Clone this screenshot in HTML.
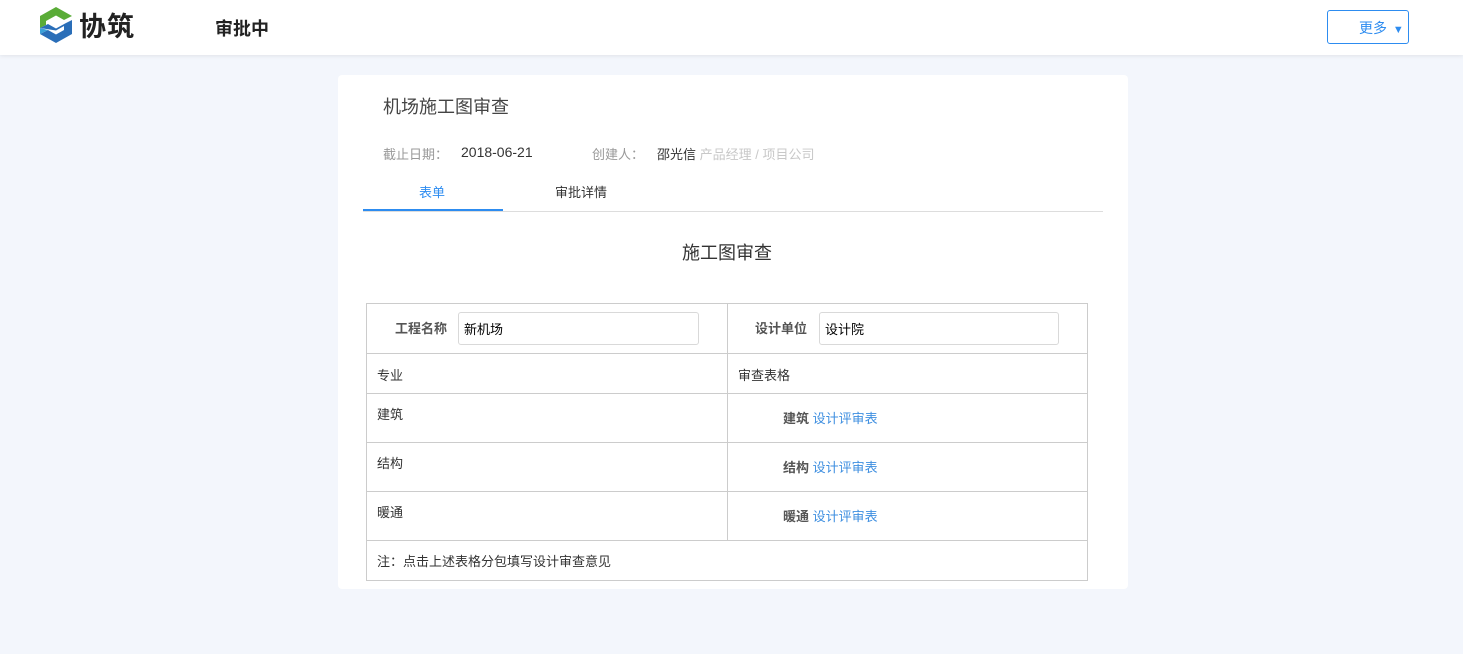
<!DOCTYPE html>
<html><head><meta charset="utf-8"><style>
*{margin:0;padding:0;box-sizing:border-box}
body{width:1463px;height:654px;background:#f3f6fc;font-family:"Liberation Sans","Noto Sans CJK SC",sans-serif;position:relative;overflow:hidden;color:#333}
.a{position:absolute;white-space:nowrap}
.hdr{position:absolute;left:0;top:0;width:1463px;height:55px;background:#fff;box-shadow:0 1px 4px rgba(0,0,0,.08)}
.card{position:absolute;left:338px;top:75px;width:790px;height:514px;background:#fff;border-radius:4px}
.tb{position:absolute;left:366px;top:303px;width:722px;height:278px;border:1px solid #ccc}
.hl{position:absolute;left:0;width:720px;height:1px;background:#ccc}
.inp{position:absolute;height:33px;border:1px solid #d9d9d9;border-radius:3px;font-size:13px;padding:6px 5px;color:#000}
.f13{font-size:13px}
.lk{color:#3f8fe0}
</style></head><body>
<div class="hdr">
<svg class="a" style="left:38px;top:6px" width="36" height="38" viewBox="0 0 36 38">
<path d="M18 1 L34 10 L26 14 L18 9.5 L8 15 L8 19 L2 22 L2 10 Z" fill="#5aac37"/>
<path d="M2 22 L10 18 L18 22.5 L28 17 L34 14 L34 28 L18 37 L2 28 L10 24 L18 28.5 L26 24 L26 20 L18 24.5 Z" fill="#2a6eb8"/>
<path d="M2 22 L2 28 L10 24 Z" fill="#3aa0d8"/>
</svg>
<div class="a" style="left:79px;top:5px;font-size:27px;color:#222;font-weight:bold;letter-spacing:1px">协筑</div>
<div class="a" style="left:215px;top:15px;font-size:18px;font-weight:bold;color:#222">审批中</div>
<div class="a" style="left:1327px;top:10px;width:82px;height:34px;border:1px solid #2d8cf0;border-radius:3px;color:#2d8cf0;font-size:14px;padding:7px 0 0 31px">更多 <span style="font-size:11px;margin-left:2px">▼</span></div>
</div>
<div class="card">
<div class="a" style="left:45px;top:18px;font-size:18px;color:#444">机场施工图审查</div>
<div class="a f13" style="left:45px;top:69px;color:#999">截止日期：</div>
<div class="a" style="left:123px;top:69px;font-size:14px;color:#333">2018-06-21</div>
<div class="a f13" style="left:254px;top:69px;color:#999">创建人：</div>
<div class="a f13" style="left:319px;top:69px;color:#333">邵光信 <span style="color:#c8c8c8">产品经理 / 项目公司</span></div>
<div class="a f13" style="left:81px;top:107px;color:#2d8cf0">表单</div>
<div class="a f13" style="left:217px;top:107px;color:#333">审批详情</div>
<div class="a" style="left:25px;top:136px;width:740px;height:1px;background:#ddd"></div>
<div class="a" style="left:25px;top:134px;width:140px;height:2px;background:#2d8cf0"></div>
<div class="a" style="left:344px;top:164px;font-size:18px;color:#333">施工图审查</div>
</div>
<div class="tb">
<div class="a" style="left:360px;top:0;width:1px;height:237px;background:#ccc"></div>
<div class="hl" style="top:49px"></div><div class="hl" style="top:89px"></div><div class="hl" style="top:138px"></div><div class="hl" style="top:187px"></div><div class="hl" style="top:236px"></div>
<div class="a f13" style="left:28px;top:14px;color:#555;font-weight:bold">工程名称</div>
<div class="inp" style="left:91px;top:8px;width:241px">新机场</div>
<div class="a f13" style="left:388px;top:14px;color:#555;font-weight:bold">设计单位</div>
<div class="inp" style="left:452px;top:8px;width:240px">设计院</div>
<div class="a f13" style="left:10px;top:61px">专业</div>
<div class="a f13" style="left:371px;top:61px">审查表格</div>
<div class="a f13" style="left:10px;top:100px">建筑</div>
<div class="a f13" style="left:10px;top:149px">结构</div>
<div class="a f13" style="left:10px;top:198px">暖通</div>
<div class="a f13" style="left:416px;top:104px"><b style="color:#555">建筑</b> <span class="lk">设计评审表</span></div>
<div class="a f13" style="left:416px;top:153px"><b style="color:#555">结构</b> <span class="lk">设计评审表</span></div>
<div class="a f13" style="left:416px;top:202px"><b style="color:#555">暖通</b> <span class="lk">设计评审表</span></div>
<div class="a f13" style="left:10px;top:247px">注：点击上述表格分包填写设计审查意见</div>
</div>
</body></html>
